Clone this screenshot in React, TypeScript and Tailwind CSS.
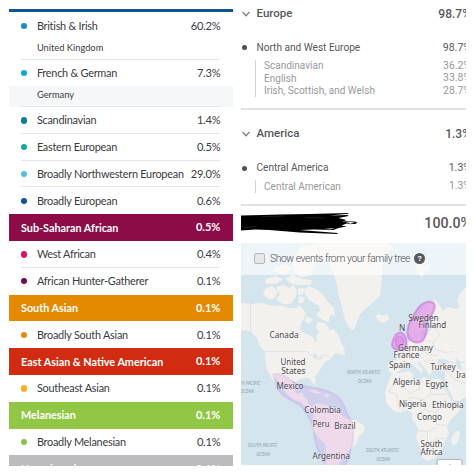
import React from 'react';
import { clsx } from 'clsx';

interface Ancestry {
  name: string;
  value: string;
  dot?: string;
  header?: string;
  sub?: string;
  subShaded?: boolean;
  last?: boolean;
}

const ancestries: Ancestry[] = [
  { name: 'British & Irish', value: '60.2%', dot: 'bg-[#168bc4]', sub: 'United Kingdom' },
  { name: 'French & German', value: '7.3%', dot: 'bg-[#12a5e0]', sub: 'Germany', subShaded: true },
  { name: 'Scandinavian', value: '1.4%', dot: 'bg-[#0b7ba0]' },
  { name: 'Eastern European', value: '0.5%', dot: 'bg-[#0fa99f]' },
  { name: 'Broadly Northwestern European', value: '29.0%', dot: 'bg-[#56c0de]' },
  { name: 'Broadly European', value: '0.6%', dot: 'bg-[#0d5591]', last: true },
  { name: 'Sub-Saharan African', value: '0.5%', header: 'bg-[#8c0c48]' },
  { name: 'West African', value: '0.4%', dot: 'bg-[#dc1268]' },
  { name: 'African Hunter-Gatherer', value: '0.1%', dot: 'bg-[#700b54]', last: true },
  { name: 'South Asian', value: '0.1%', header: 'bg-[#e48a00]' },
  { name: 'Broadly South Asian', value: '0.1%', dot: 'bg-[#e48a0c]', last: true },
  { name: 'East Asian & Native American', value: '0.1%', header: 'bg-[#d12c12]' },
  { name: 'Southeast Asian', value: '0.1%', dot: 'bg-[#fbae26]', last: true },
  { name: 'Melanesian', value: '0.1%', header: 'bg-[#91c744]' },
  { name: 'Broadly Melanesian', value: '0.1%', dot: 'bg-[#8bc34a]', last: true },
  { name: 'Unassigned', value: '0.1%', header: 'bg-[#bcbcbe]' },
];

const AncestryRow: React.FC<{ item: Ancestry }> = ({ item }) => {
  if (item.header) {
    return (
      <div className={clsx('flex h-[26.8px] shrink-0 items-center justify-between pl-[12.5px] pr-[12.5px] text-[10.8px] font-bold text-white', item.header)}>
        <span>{item.name}</span>
        <span className="text-[11px]">{item.value}</span>
      </div>
    );
  }
  return (
    <div className="relative shrink-0">
      <div className={clsx('flex items-center pl-[12.5px] pr-[12.5px] text-[10.9px] tracking-[-0.25px]', item.sub ? 'h-[26px] pt-[1px]' : 'h-[26.8px]')}>
        <span className={clsx('mr-[9.7px] size-[6.2px] shrink-0 rounded-full', item.dot)} />
        <span className="grow whitespace-nowrap">{item.name}</span>
        <span className="text-[11.1px]">{item.value}</span>
      </div>
      {item.sub && (
        <div className={clsx('flex h-[21.2px] items-center pl-[28.4px] pb-[3px] text-[9.3px]', item.subShaded && 'bg-[#f6f7f9]')}>
          {item.sub}
        </div>
      )}
      {!item.last && <div className="absolute bottom-0 left-[12.5px] right-[12.5px] h-px bg-[#e4e6e8]" />}
    </div>
  );
};

interface RegionProps {
  title: string;
  value: string;
  group: string;
  items: { name: string; value: string }[];
}

const Region: React.FC<RegionProps> = ({ title, value, group, items }) => (
  <div className="shrink-0 border-b-2 border-[#e2e2e2] pb-[11px] text-[#58585a]">
    <div className="flex h-6 items-center text-[11.8px] font-medium">
      <svg className="ml-[0.5px] mr-[6.5px] h-[6px] w-[8px] shrink-0" viewBox="0 0 8 6" fill="none" stroke="#808084" strokeWidth="1.3">
        <path d="M0.5 1 L4 4.8 L7.5 1" />
      </svg>
      <span className="grow text-[11.5px]">{title}</span>
      <Percent value={value} className="text-[12px]" />
    </div>
    <div className="mt-[10px] flex h-6 items-center text-[10.1px]">
      <span className="ml-[1px] mr-[9px] size-[5px] rounded-full bg-[#505052]" />
      <span className="grow">{group}</span>
      <Percent value={value} className="text-[10.5px]" />
    </div>
    <div className="ml-[14px] border-l border-[#d2d2d2] pl-[7.6px] text-[10px] text-[#98989b]">
      {items.map((item) => (
        <div key={item.name} className="flex h-[12.5px] items-center">
          <span className="grow whitespace-nowrap">{item.name}</span>
          <Percent value={item.value} className="text-[10.4px]" />
        </div>
      ))}
    </div>
  </div>
);

// The percent sign runs past the panel's right edge and is cut off there
const Percent: React.FC<{ value: string; className?: string }> = ({ value, className }) => (
  <span className={clsx('-mr-[5px] whitespace-nowrap', className)}>{value}</span>
);

const LAND = [
  // North and Central America
  'M241 303 L247 303 L252 304 L258 303 L264 303 L269 305 L276 306 L281 305 L286 307 L291 308 L297 308 L300 305 L303 309 L306 313 L304 318 L301 323 L300 329 L305 333 L310 335 L314 338 L315 342 L318 341 L317 336 L320 331 L317 327 L318 322 L323 322 L327 325 L330 330 L334 329 L338 334 L341 341 L344 348 L342 353 L336 352 L332 356 L330 359 L325 361 L322 366 L319 371 L315 376 L316 384 L313 382 L311 378 L306 377 L299 379 L295 382 L294 388 L297 394 L303 392 L304 396 L307 399 L309 404 L313 407 L311 410 L306 406 L301 401 L293 398 L287 393 L283 386 L278 379 L275 377 L277 384 L273 378 L268 369 L266 359 L266 351 L260 345 L258 338 L252 331 L245 329 L241 330 Z',
  // South America
  'M312 407 L317 403 L324 404 L332 407 L338 411 L343 416 L349 419 L357 421 L365 426 L364 431 L359 436 L356 444 L349 450 L345 457 L340 462 L337 468 L326 468 L327 455 L326 444 L319 437 L314 429 L312 423 L315 417 Z',
  // Greenland
  'M320 240 L317 249 L323 255 L330 264 L335 273 L338 285 L340 296 L343 307 L346 319 L350 327 L354 329 L357 322 L360 314 L367 307 L373 302 L380 295 L381 286 L382 276 L383 262 L388 253 L392 246 L386 240 Z',
  // Arctic islands
  'M266 288 L273 286 L278 291 L275 297 L270 299 L264 294 Z M277 287 L284 285 L290 288 L294 285 L297 291 L295 298 L291 303 L283 303 L277 299 L281 294 Z M299 288 L305 288 L303 294 L299 294 Z M300 296 L305 297 L303 302 L299 302 Z M266 279 L276 276 L283 279 L276 283 L267 283 Z M286 278 L294 275 L303 279 L312 280 L311 284 L301 284 L292 283 Z M276 267 L286 264 L292 269 L284 273 L276 271 Z M293 260 L303 246 L319 244 L322 255 L315 264 L311 275 L301 276 L294 270 Z M309 286 L317 289 L323 294 L328 301 L334 307 L335 315 L330 314 L329 321 L323 319 L317 314 L321 310 L320 305 L314 302 L309 298 L305 291 Z M307 316 L313 319 L310 323 L306 321 Z M337 348 L344 347 L345 354 L338 353 Z',
  // Caribbean
  'M309 390 L315 389 L322 393 L317 393 Z M324 394 L330 394 L328 397 Z',
  // Iceland, Svalbard, British Isles
  'M377 315 L380 314 L384 316 L388 314 L389 319 L383 322 L378 319 Z M416 265 L421 263 L425 267 L430 264 L427 271 L422 276 L418 271 Z M398 335 L402 333 L402 339 L406 345 L403 349 L397 348 L400 343 Z M394 341 L398 340 L397 347 L393 347 Z',
  // Europe and Asia
  'M467 286 L461 293 L458 301 L461 306 L457 309 L448 307 L443 311 L441 307 L436 300 L429 302 L423 309 L418 318 L411 324 L409 330 L412 336 L416 333 L419 337 L416 339 L414 336 L410 341 L405 346 L399 350 L395 352 L398 357 L397 360 L391 360 L389 363 L390 371 L395 373 L401 369 L404 364 L410 362 L414 364 L421 371 L421 373 L423 369 L417 362 L420 361 L426 368 L430 374 L433 369 L438 370 L446 370 L446 377 L445 383 L451 391 L454 399 L459 401 L467 395 Z',
  // Africa
  'M393 373 L400 373 L409 371 L413 373 L413 377 L420 381 L424 377 L431 379 L440 379 L443 384 L448 394 L453 403 L463 403 L459 411 L451 419 L447 426 L449 434 L445 440 L442 448 L436 457 L428 460 L423 457 L421 447 L417 437 L419 429 L416 422 L413 419 L413 412 L408 409 L401 412 L394 410 L387 402 L386 393 L389 382 Z',
  // Madagascar
  'M459 430 L460 434 L457 443 L453 444 L452 438 L455 433 Z',
].join(' ');

const BORDERS =
  'M251 304 V331 M266 351 H307 L313 356 L319 359 L325 354 L331 357 M275 377 L285 378 L294 383 M290 396 L295 397 M322 406 L324 418 L332 419 M316 424 L325 420 L328 428 L333 435 L341 438 L344 446 L338 453 M327 441 L334 438 M331 448 L333 466 ' +
  'M420 333 L424 340 L433 341 L436 349 L446 352 L454 351 M430 315 L434 325 L440 334 L434 342 M409 350 L412 359 L420 355 L426 361 L434 360 M424 340 L421 349 L429 354 L438 355 M450 361 L458 363 L466 361 ' +
  'M396 382 L389 391 M400 376 L404 387 L411 393 L420 388 V379 M431 379 V394 L424 399 L412 397 L405 401 L404 410 M431 394 L446 394 M424 399 L426 410 L416 414 M426 410 L436 412 L443 406 L446 397 M436 412 L437 424 L447 425 M417 430 L428 431 L437 427 M428 431 V443 L420 447 M428 443 L438 438 L445 438 M389 391 L397 394 L400 408 M447 370 L455 379 L466 383';

const AMERICAS =
  'M274 374 C281 372 288 378 298 384 C311 388 326 387 338 396 C346 403 345 410 349 416 C355 424 354 440 351 450 C350 458 346 464 344 468 L329 468 C322 458 317 450 315 437 C315 425 309 414 301 405 C293 400 282 396 278 388 Z';

const LABELS: { text: string; x: number; y: number; w?: number }[] = [
  { text: 'Canada', x: 270, y: 337.5, w: 29 },
  { text: 'United', x: 281, y: 364, w: 25 },
  { text: 'States', x: 281.7, y: 373, w: 24.3 },
  { text: 'Mexico', x: 277, y: 388.7, w: 27 },
  { text: 'Colombia', x: 304.8, y: 412, w: 36.5 },
  { text: 'Peru', x: 313, y: 426.5, w: 17 },
  { text: 'Brazil', x: 334.7, y: 428.5, w: 21.5 },
  { text: 'Argentina', x: 313, y: 458.3, w: 37.5 },
  { text: 'Sweden', x: 408.7, y: 320, w: 30.5 },
  { text: 'Finland', x: 419, y: 327, w: 27.7 },
  { text: 'N', x: 399.5, y: 330 },
  { text: 'Germany', x: 398.5, y: 350, w: 35 },
  { text: 'France', x: 394, y: 357.7, w: 26 },
  { text: 'Spain', x: 389.5, y: 367.5, w: 21.5 },
  { text: 'Turkey', x: 431, y: 369.5, w: 25 },
  { text: 'Iran', x: 456.7, y: 377.7, w: 14 },
  { text: 'Algeria', x: 393.5, y: 384, w: 27 },
  { text: 'Egypt', x: 426, y: 386, w: 22.5 },
  { text: 'Nigeria', x: 399.5, y: 406, w: 27.5 },
  { text: 'Ethiopia', x: 432.5, y: 407, w: 31.5 },
  { text: 'Congo', x: 417.5, y: 419, w: 25 },
  { text: 'South', x: 421, y: 446, w: 22 },
  { text: 'Africa', x: 421, y: 454.7, w: 22 },
];

const OCEANS = [
  { text: 'NORTH PACIFIC', x: 246, y: 384 },
  { text: 'OCEAN', x: 247.5, y: 392.3 },
  { text: 'SOUTH PACIFIC', x: 263, y: 446.7 },
  { text: 'OCEAN', x: 263.5, y: 455 },
  { text: 'NORTH ATLANTIC', x: 364, y: 373.5 },
  { text: 'OCEAN', x: 365, y: 382 },
  { text: 'SOUTH ATLANTIC', x: 383, y: 451.3 },
  { text: 'OCEAN', x: 383.5, y: 460 },
];

const WorldMap: React.FC = () => (
  <svg className="block h-full w-full" viewBox="241.5 242.5 224.5 222.5" preserveAspectRatio="none">
    <defs>
      <clipPath id="land">
        <path d={LAND} />
      </clipPath>
    </defs>
    <rect x="241" y="242" width="226" height="224" fill="#d5e5ee" />
    <path d={LAND} fill="#f3f1ed" stroke="#f3f1ed" strokeWidth="0.8" strokeLinejoin="round" />
    {/* Great Lakes, Baltic, Black and Caspian seas, Red Sea */}
    <path
      d="M313 353 L317 354 L318 358 L315 357 Z M319 356 L323 357 L321 359 Z M429 318 L433 314 L431 321 L435 325 L431 329 L427 335 L421 337 L421 332 L427 328 Z M438 359 L444 358 L451 362 L446 364 L438 363 Z M456 358 L460 360 L463 370 L458 368 Z M445 383 L454 399 L452 400 L443 386 Z"
      fill="#d5e5ee"
    />
    <path d={BORDERS} fill="none" stroke="#dad6d8" strokeWidth="0.6" />
    <path d={AMERICAS} fill="#c9bdea" fillOpacity="0.5" stroke="#c3b2e6" strokeOpacity="0.45" strokeWidth="2" />
    <path d={AMERICAS} fill="#f7dcec" fillOpacity="0.65" clipPath="url(#land)" />
    <g fill="#dd8ae8" fillOpacity="0.65" stroke="#c873d8" strokeOpacity="0.6" strokeWidth="2">
      <path d="M433.5 302 C438 305 433 314 428 321 C427 331 427 340 419 342 C413 342.5 407 339 408 330 C409 322 413 315 419 307 C423 302 429 300 433.5 302 Z" />
      <path d="M402 332 C407 335 408 342 406 348 C401 351 394 350 392.5 345 C393 338 396 332 402 332 Z" />
      <ellipse cx="400" cy="341.5" rx="4" ry="6" strokeWidth="1.2" />
    </g>
    <g fill="#4b474f" fontFamily="'Noto Sans', sans-serif" fontSize="8.3" stroke="#fff" strokeOpacity="0.3" strokeWidth="1.2" paintOrder="stroke">
      {LABELS.map((l) => (
        <text key={l.text} x={l.x} y={l.y} textLength={l.w} lengthAdjust="spacingAndGlyphs">
          {l.text}
        </text>
      ))}
    </g>
    <g fill="#8b9dac" fontFamily="'Noto Sans', sans-serif" fontSize="4.4" fontStyle="italic" textAnchor="middle">
      {OCEANS.map((o) => (
        <text key={`${o.text}-${o.y}`} x={o.x} y={o.y}>
          {o.text}
        </text>
      ))}
    </g>
    <rect x="437.5" y="459" width="25" height="14" rx="2" fill="#fff" stroke="#b4b8bc" strokeWidth="1.2" />
    <path d="M449 465 L450.5 464 L452 465" stroke="#aaa" fill="none" strokeWidth="0.8" />
  </svg>
);

const Scribble: React.FC = () => (
  <svg className="h-[24px] w-[120px] shrink-0" viewBox="241.5 212 120 24">
    <path
      d="M241.5 215.5 L263 215 L280 214.5 L310 214 L349 213 L349 213.8 L330 215.5 L348 215 L349 216 L339 218 L347 220 L343 221.5 L351 221.5 L358 222.5 L356 224 L347 223.5 L342 225.5 L347 226.5 L339 228 L334 230 L315 229.5 L300 230 L338 233 L338 234 L300 232.5 L270 230 L256 229.5 L241.5 230.5 Z"
      fill="#000"
    />
    <path d="M345 221.5 L356 221.8 L351 224 Z M324 229 L331 229.5 L336 228" fill="#fff" stroke="#000" strokeWidth="0.5" />
    <path d="M263 216.5 L285 216 M306 217.5 L325 218 M244 228 L256 226.5" stroke="#666" strokeWidth="0.3" />
  </svg>
);

const App: React.FC = () => {
  return (
    <div className="flex h-[474px] w-[474px] overflow-hidden bg-white">
      {/* Ancestry composition */}
      <div className="ml-[8.5px] mt-[8.5px] flex h-[457px] w-[224.3px] shrink-0 flex-col overflow-hidden font-[Lato,sans-serif] text-[#3a3b3e]">
        <div className="mb-[0.5px] h-[3.7px] shrink-0 bg-[#0f5590]" />
        {ancestries.map((item) => (
          <AncestryRow key={item.name} item={item} />
        ))}
      </div>

      {/* Ethnicity estimate */}
      <div className="ml-[8.7px] flex h-[465px] w-[224.5px] shrink-0 flex-col overflow-hidden pt-[1.5px] font-[Roboto,sans-serif]">
        <Region
          title="Europe"
          value="98.7%"
          group="North and West Europe"
          items={[
            { name: 'Scandinavian', value: '36.2%' },
            { name: 'English', value: '33.8%' },
            { name: 'Irish, Scottish, and Welsh', value: '28.7%' },
          ]}
        />
        <div className="h-3 shrink-0" />
        <Region title="America" value="1.3%" group="Central America" items={[{ name: 'Central American', value: '1.3%' }]} />
        <div className="flex h-[37px] shrink-0 items-center justify-between text-[#58585a]">
          <Scribble />
          <Percent value="100.0%" className="text-[14.2px] font-medium" />
        </div>
        <div className="relative min-h-0 grow">
          <WorldMap />
          <div className="absolute inset-x-0 top-0 flex h-[32.5px] items-center bg-white/60 pl-[12.5px] text-[10.3px] font-light tracking-[-0.42px] text-[#4c4f53]">
            <span className="mr-[5px] size-[11px] shrink-0 rounded-[2px] border border-[#b5b8ba] bg-[#e6e7e8]" />
            <span className="whitespace-nowrap">Show events from your family tree</span>
            <span className="ml-1 flex size-[11px] items-center justify-center rounded-full bg-[#58595b] text-[8px] font-bold text-white">?</span>
          </div>
        </div>
      </div>
    </div>
  );
};

export default App;
